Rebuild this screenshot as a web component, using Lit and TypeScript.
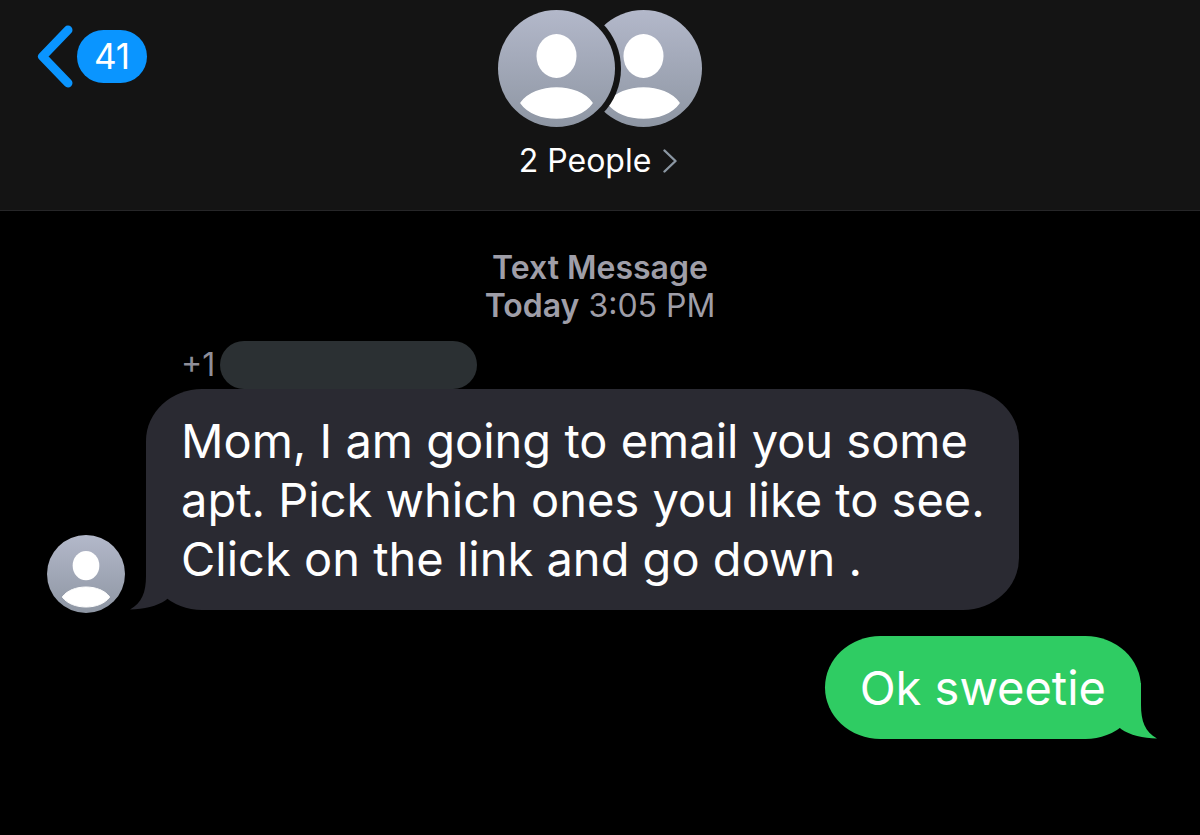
import { LitElement, html, css, svg } from "lit";
import { customElement, property } from "lit/decorators.js";

@customElement("person-avatar")
class PersonAvatar extends LitElement {
  @property({ type: Boolean }) clipped = false;

  static styles = css`
    :host {
      display: block;
    }
    .art {
      display: block;
      width: 100%;
      height: 100%;
    }
  `;

  render() {
    return html`
      <svg class="art" viewBox="0 0 117 117" aria-hidden="true">
        <defs>
          <linearGradient id="shade" x1="0" y1="0" x2="0" y2="1">
            <stop offset="0" stop-color="#b3b8ca" />
            <stop offset="1" stop-color="#8e96a3" />
          </linearGradient>
          <mask id="cut">
            <rect width="117" height="117" fill="#fff" />
            ${this.clipped ? svg`<circle cx="-28.5" cy="58.5" r="64.5" fill="#000" />` : null}
          </mask>
        </defs>
        <g mask="url(#cut)">
          <circle cx="58.5" cy="58.5" r="58.5" fill="url(#shade)" />
          <ellipse cx="58.5" cy="46" rx="20" ry="22" fill="#fff" />
          <path
            d="M23 93C37 73 80 73 94 93C80 113 37 113 23 93Z"
            fill="#fff"
            stroke="#fff"
            stroke-width="1.5"
            stroke-linejoin="round"
          />
        </g>
      </svg>
    `;
  }
}

@customElement("chat-bubble")
class ChatBubble extends LitElement {
  @property({ type: Boolean, reflect: true }) sent = false;

  static styles = css`
    :host {
      display: block;
      position: relative;
      box-sizing: border-box;
      max-width: 873px;
      padding: 22px 30px 22px 35px;
      border-radius: 56px / 52px;
      background: #2a2a32;
      color: #fff;
      font-size: 47px;
      line-height: 59px;
    }
    :host([sent]) {
      padding-right: 35px;
      background: #2fcc63;
    }
    .text {
      margin: 0;
    }
    .tail {
      position: absolute;
      left: -16px;
      bottom: 0;
      width: 40px;
      height: 56px;
      fill: #2a2a32;
    }
    :host([sent]) .tail {
      left: auto;
      right: -16px;
      transform: scaleX(-1);
      fill: #2fcc63;
    }
  `;

  render() {
    return html`
      <p class="text"><slot></slot></p>
      <svg class="tail" viewBox="0 0 40 56" aria-hidden="true">
        <path d="M16 0V22C16 38 12 49 0 55.5C14 55.5 27 52 36 46L40 42V0Z" />
      </svg>
    `;
  }
}

@customElement("app-root")
class AppRoot extends LitElement {
  static styles = css`
    :host {
      display: flex;
      flex-direction: column;
      min-height: 100vh;
      background: #000;
      color: #fff;
      font-family: Inter, "Liberation Sans", sans-serif;
    }
    .bar {
      display: grid;
      grid-template-columns: 1fr auto 1fr;
      align-items: start;
      padding: 10px 37px 30px;
      border-bottom: 1px solid #262628;
      background: #141414;
    }
    button {
      border: 0;
      padding: 0;
      background: none;
      color: inherit;
      font: inherit;
      cursor: pointer;
    }
    .back {
      display: flex;
      align-items: center;
      justify-self: start;
      gap: 4px;
      margin-top: 15px;
    }
    .arrow {
      width: 36px;
      height: 63px;
      fill: none;
      stroke: #0a95ff;
      stroke-width: 9;
      stroke-linecap: round;
      stroke-linejoin: round;
    }
    .count {
      min-width: 70px;
      border-radius: 27px;
      background: #0a95ff;
      font-size: 35px;
      line-height: 53px;
      text-align: center;
    }
    .group {
      display: flex;
      flex-direction: column;
      align-items: center;
      gap: 15px;
    }
    .faces {
      display: flex;
    }
    .face {
      width: 117px;
      height: 117px;
    }
    .face + .face {
      margin-left: -30px;
    }
    .name {
      display: flex;
      align-items: center;
      gap: 12px;
      padding-right: 4px;
      font-size: 32px;
      line-height: 38px;
    }
    .more {
      width: 14px;
      height: 24px;
      fill: none;
      stroke: #8b97a3;
      stroke-width: 2.4;
      stroke-linecap: round;
      stroke-linejoin: round;
    }
    .thread {
      display: flex;
      flex-direction: column;
      padding: 38px 59px 40px 47px;
    }
    .stamp {
      margin: 0 0 16px 12px;
      color: #9f9ea8;
      font-size: 32px;
      line-height: 38px;
      text-align: center;
    }
    .stamp b {
      font-weight: 600;
    }
    .sender {
      display: flex;
      align-items: center;
      gap: 5px;
      padding-left: 134px;
      color: #8f8e98;
      font-size: 32px;
      line-height: 48px;
    }
    .hidden-number {
      width: 257px;
      height: 48px;
      border-radius: 26px;
      background: #2b3033;
    }
    .received {
      display: flex;
      align-items: flex-end;
      gap: 21px;
    }
    .small {
      flex: none;
      width: 78px;
      height: 78px;
      margin-bottom: -3px;
    }
    .reply {
      display: flex;
      justify-content: flex-end;
      margin-top: 26px;
    }
  `;

  render() {
    return html`
      <header class="bar">
        <button class="back" type="button" aria-label="Back, 41 unread">
          <svg class="arrow" viewBox="0 0 36 63" aria-hidden="true">
            <path d="M31 5L5.500 31.500L31 58" />
          </svg>
          <span class="count">41</span>
        </button>
        <button class="group" type="button">
          <span class="faces">
            <person-avatar class="face"></person-avatar>
            <person-avatar class="face" clipped></person-avatar>
          </span>
          <span class="name">
            2 People
            <svg class="more" viewBox="0 0 14 24" aria-hidden="true">
              <path d="M1.500 1.500L12.500 12L1.500 22.500" />
            </svg>
          </span>
        </button>
      </header>
      <main class="thread">
        <p class="stamp"><b>Text Message</b><br /><b>Today</b> 3:05 PM</p>
        <div class="sender">+1<span class="hidden-number"></span></div>
        <div class="received">
          <person-avatar class="small"></person-avatar>
          <chat-bubble>Mom, I am going to email you some apt. Pick which ones you like to see. Click on the link and go down .</chat-bubble>
        </div>
        <div class="reply"><chat-bubble sent>Ok sweetie</chat-bubble></div>
      </main>
    `;
  }
}
